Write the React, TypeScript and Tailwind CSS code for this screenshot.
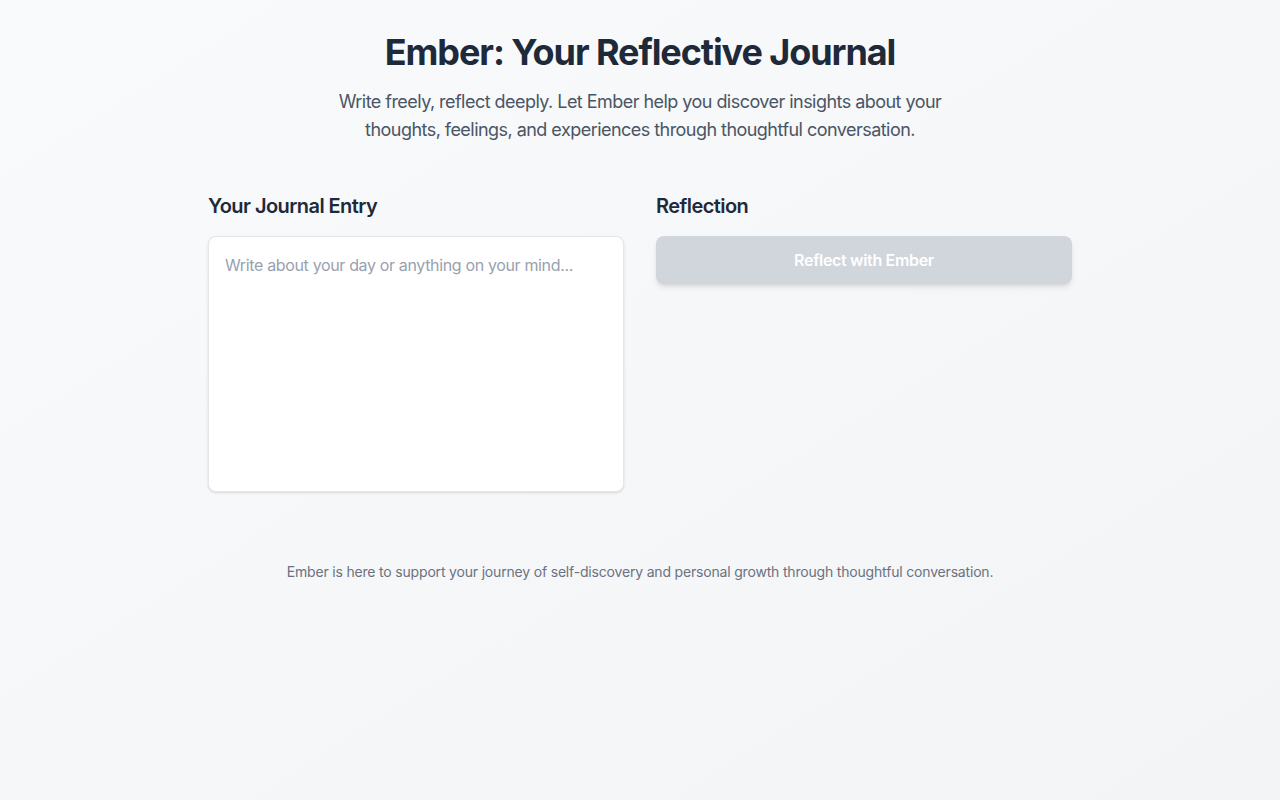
import React from "react";

export default function App() {
  return (
    <div
      className="min-h-screen bg-gradient-to-br from-gray-50 to-gray-100"
      style={{ fontFamily: "Inter, 'Noto Sans', sans-serif" }}
    >
      <div className="max-w-4xl mx-auto px-4 py-8">
        <header className="text-center mb-12">
          <h1 className="text-4xl font-bold text-gray-800 mb-4 tracking-[-0.03em]">Ember: Your Reflective Journal</h1>
          <p className="text-lg text-gray-600 max-w-2xl mx-auto tracking-[-0.03em]">
            Write freely, reflect deeply. Let Ember help you discover insights about your thoughts, feelings, and
            experiences through thoughtful conversation.
          </p>
        </header>
        <div className="grid grid-cols-2 gap-8">
          <div>
            <h2 className="text-xl font-semibold text-gray-800 mb-4 tracking-[-0.028em]">Your Journal Entry</h2>
            <textarea
              className="w-full h-64 p-4 bg-white border border-gray-200 rounded-lg shadow-sm resize-none text-gray-700 placeholder-gray-400 focus:outline-none block tracking-[-0.022em]"
              placeholder="Write about your day or anything on your mind..."
            />
          </div>
          <div>
            <h2 className="text-xl font-semibold text-gray-800 mb-4 tracking-[-0.028em]">Reflection</h2>
            <button
              disabled
              className="w-full py-3 rounded-lg bg-gray-300 text-white font-semibold shadow-md tracking-[-0.02em]"
            >
              Reflect with Ember
            </button>
          </div>
        </div>
        <footer className="mt-[70px] text-center text-sm text-gray-500 tracking-[-0.013em]">
          Ember is here to support your journey of self-discovery and personal growth through thoughtful conversation.
        </footer>
      </div>
    </div>
  );
}
